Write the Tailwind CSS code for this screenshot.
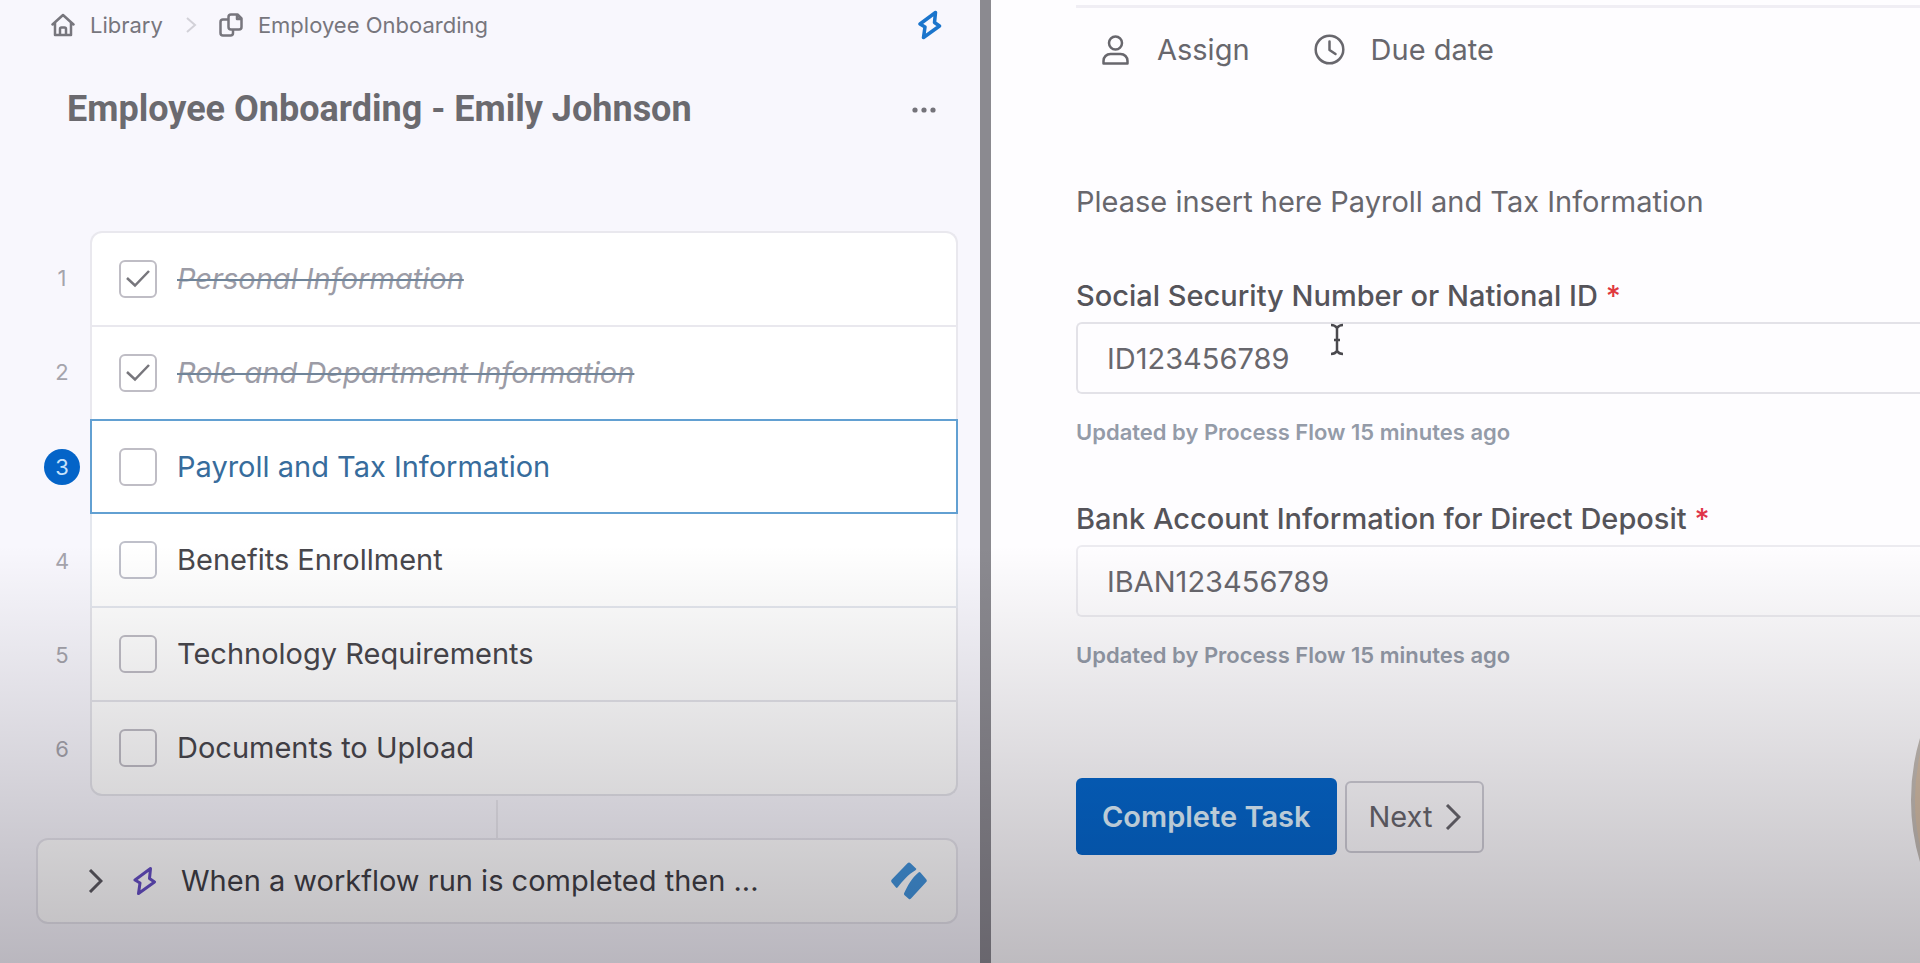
<!DOCTYPE html>
<html lang="en">
<head>
<meta charset="utf-8">
<meta name="viewport" content="width=device-width, initial-scale=1">
<title>Employee Onboarding - Emily Johnson</title>
<script src="https://cdn.jsdelivr.net/npm/@tailwindcss/browser@4"></script>
</head>
<body class="font-['Inter',sans-serif] text-[29px] leading-9">
<div class="relative grid min-h-screen grid-cols-[980fr_11fr_929fr] overflow-hidden">

  <!-- Workflow run outline -->
  <aside class="bg-[#f8f7fd] pr-[22px]">
    <header class="flex h-[50px] items-center justify-between pl-[51px] pr-4">
      <nav aria-label="Breadcrumb" class="flex items-center text-[22px] leading-7 text-[#77767d]">
        <a href="#" class="flex items-center gap-[15px]">
          <svg class="size-6" viewBox="0 0 24 24" fill="none" stroke="currentColor" stroke-width="2.500" stroke-linecap="round" stroke-linejoin="round" aria-hidden="true"><path d="M1.500 11.500 12 2l10.500 9.500M4 10v12h16V10M9 22v-6q0-1.500 1.500-1.500h3q1.500 0 1.500 1.500v6"/></svg>
          Library
        </a>
        <svg class="mx-[22px] h-4 w-3" viewBox="0 0 12 16" fill="none" stroke="#d2d1d8" stroke-width="2" aria-hidden="true"><path d="m2 1 8 7-8 7"/></svg>
        <a href="#" class="flex items-center gap-[15px]">
          <svg class="size-6" viewBox="0 0 24 24" fill="none" stroke="currentColor" stroke-width="2.500" stroke-linejoin="round" aria-hidden="true"><path d="M12 1.500h6.500l4 4V14a2.500 2.500 0 0 1-2.500 2.500h-8A2.500 2.500 0 0 1 9.500 14V4A2.500 2.500 0 0 1 12 1.500ZM18 1.500V6h4.500M9.500 6.500H4A2.500 2.500 0 0 0 1.500 9v11A2.500 2.500 0 0 0 4 22.500h7.500A2.500 2.500 0 0 0 14 20v-3.500"/></svg>
          Employee Onboarding
        </a>
      </nav>
      <button type="button" aria-label="Automations" class="text-[#1b75cc]">
        <svg class="h-[30px] w-6" viewBox="0 0 24 30" fill="none" stroke="currentColor" stroke-width="3.500" stroke-linejoin="round" aria-hidden="true"><path d="M17.500 2.500 2 14l5 3-1.500 10.500L21.500 16l-5-3.500Z"/></svg>
      </button>
    </header>

    <div class="flex h-[118px] items-center justify-between pl-[67px] pr-[21px]">
      <h1 class="font-['Roboto',sans-serif] text-[36px] leading-10 font-bold text-[#6b6a6f]">Employee Onboarding - Emily Johnson</h1>
      <button type="button" aria-label="More options" class="text-[#74737a]">
        <svg class="h-6 w-[26px]" viewBox="0 0 26 24" fill="currentColor" aria-hidden="true"><circle cx="4" cy="13" r="2.600"/><circle cx="13" cy="13" r="2.600"/><circle cx="22" cy="13" r="2.600"/></svg>
      </button>
    </div>

    <ol class="mt-[63px] grid grid-cols-[90px_1fr] text-[#48474c]">
      <li class="contents">
        <span class="flex items-center justify-center pl-[34px] text-[22px] leading-7 text-[#a5a4ac]"><span class="flex size-9 items-center justify-center">1</span></span>
        <label class="flex h-[94px] items-center gap-5 rounded-t-xl border-x-2 border-t-2 border-[#e9e8ee] bg-white pl-[27px] text-[#9c9ca6] italic line-through decoration-[#6f8499] decoration-2">
          <span class="grid size-[38px] shrink-0"><input type="checkbox" checked class="col-start-1 row-start-1 size-[38px] appearance-none rounded-md border-2 border-[#bfbdc5]"><svg class="pointer-events-none col-start-1 row-start-1 size-[38px]" viewBox="0 0 38 38" fill="none" stroke="#77767c" stroke-width="2.500" aria-hidden="true"><path d="m8 18 8 7.500 14-14.500"/></svg></span>
          Personal Information</label>
      </li>
      <li class="contents">
        <span class="flex items-center justify-center pl-[34px] text-[22px] leading-7 text-[#a5a4ac]"><span class="flex size-9 items-center justify-center">2</span></span>
        <label class="flex h-[94px] items-center gap-5 border-x-2 border-t-2 border-[#e9e8ee] bg-white pl-[27px] text-[#9c9ca6] italic line-through decoration-[#6f8499] decoration-2">
          <span class="grid size-[38px] shrink-0"><input type="checkbox" checked class="col-start-1 row-start-1 size-[38px] appearance-none rounded-md border-2 border-[#bfbdc5]"><svg class="pointer-events-none col-start-1 row-start-1 size-[38px]" viewBox="0 0 38 38" fill="none" stroke="#77767c" stroke-width="2.500" aria-hidden="true"><path d="m8 18 8 7.500 14-14.500"/></svg></span>
          Role and Department Information</label>
      </li>
      <li class="contents">
        <span class="flex items-center justify-center pl-[34px] text-[22px] leading-7 text-[#c6e2fb]"><span class="flex size-9 items-center justify-center rounded-full bg-[#0464c8]">3</span></span>
        <label class="flex h-[95px] items-center gap-5 border-2 border-[#62a0d2] bg-white pl-[27px] text-[#376c9c]">
          <input type="checkbox" class="size-[38px] shrink-0 appearance-none rounded-md border-2 border-[#bfbdc5]">
          Payroll and Tax Information</label>
      </li>
      <li class="contents">
        <span class="flex items-center justify-center pl-[34px] text-[22px] leading-7 text-[#a5a4ac]"><span class="flex size-9 items-center justify-center">4</span></span>
        <label class="flex h-[94px] items-center gap-5 border-x-2 border-b-2 border-[#e4e7ee] bg-white pl-[27px]">
          <input type="checkbox" class="size-[38px] shrink-0 appearance-none rounded-md border-2 border-[#bfc0ca]">
          Benefits Enrollment</label>
      </li>
      <li class="contents">
        <span class="flex items-center justify-center pl-[34px] text-[22px] leading-7 text-[#a5a4ac]"><span class="flex size-9 items-center justify-center">5</span></span>
        <label class="flex h-[94px] items-center gap-5 border-x-2 border-b-2 border-[#e4e4ea] bg-white pl-[27px]">
          <input type="checkbox" class="size-[38px] shrink-0 appearance-none rounded-md border-2 border-[#bfbdc5]">
          Technology Requirements</label>
      </li>
      <li class="contents">
        <span class="flex items-center justify-center pl-[34px] text-[22px] leading-7 text-[#a5a4ac]"><span class="flex size-9 items-center justify-center">6</span></span>
        <label class="flex h-[94px] items-center gap-5 rounded-b-xl border-x-2 border-b-2 border-[#e4e4ea] bg-white pl-[27px]">
          <input type="checkbox" class="size-[38px] shrink-0 appearance-none rounded-md border-2 border-[#bfbdc5]">
          Documents to Upload</label>
      </li>
    </ol>

    <div class="flex h-[42px] justify-center pt-1 pl-9"><span class="w-[2px] bg-[#e8e7ed]"></span></div>

    <section class="ml-9 flex h-[86px] items-center rounded-xl border-2 border-[#e6e5ec] bg-white pr-[29px] pl-[49px] text-[#403f45]">
      <button type="button" aria-label="Expand automation" class="text-[#5b5a60]">
        <svg class="h-6 w-4" viewBox="0 0 16 24" fill="none" stroke="currentColor" stroke-width="3" aria-hidden="true"><path d="m3 1 11 11L3 23"/></svg>
      </button>
      <svg class="ml-[30px] h-[30px] w-6" viewBox="0 0 24 30" fill="none" stroke="#654fc4" stroke-width="3" stroke-linejoin="round" aria-hidden="true"><path d="M17.500 2.500 2 14l5 3-1.500 10.500L21.500 16l-5-3.500Z"/></svg>
      <p class="ml-6 flex-1">When a workflow run is completed then ...</p>
      <svg class="h-[38px] w-9" viewBox="0 0 36 38" fill="#4295dc" aria-hidden="true"><path d="M16.500 1.200q1.500-1.400 3 0L25 6.500q.8.800-.5 1.700C17 12.500 12 18.500 6.500 25.500q-.8.800-1.500.1L.6 20.200q-1-1.200.2-2.600ZM27.500 10.500q1-.9 1.900 0l5.800 6.800q1.200 1.400 0 2.700L20 36.600q-1.200 1.300-2.400.2l-4-3.600q-1-1-.3-2.400C17 23 20.500 16.500 27.500 10.500Z"/></svg>
    </section>
  </aside>

  <div class="bg-[#8b8a90]"></div>

  <!-- Task form -->
  <main class="bg-[#fefdff] pt-[5px] pl-[85px] text-[#68676d]">
    <div class="flex h-[86px] items-center gap-16 border-t-[3px] border-[#f0eef4] pl-[26px]">
      <button type="button" class="flex items-center gap-7">
        <svg class="h-[30px] w-[27px]" viewBox="0 0 27 30" fill="none" stroke="currentColor" stroke-width="2.500" stroke-linejoin="round" aria-hidden="true"><circle cx="13.500" cy="8" r="6.500"/><path d="M1.500 28.500v-2.500c0-4 3-7 7-7h10c4 0 7 3 7 7v2.500Z"/></svg>
        Assign
      </button>
      <button type="button" class="flex items-center gap-[26px]">
        <svg class="size-[31px]" viewBox="0 0 31 31" fill="none" stroke="currentColor" stroke-width="2.500" stroke-linecap="round" stroke-linejoin="round" aria-hidden="true"><circle cx="15.500" cy="15.500" r="13.800"/><path d="M15.500 7.500v8.500l6 4"/></svg>
        Due date
      </button>
    </div>

    <form>
      <p class="mt-[93px]">Please insert here Payroll and Tax Information</p>

      <div class="mt-[58px]">
        <label for="ssn" class="block font-medium text-[#55545a]">Social Security Number or National ID <span class="text-[#e0393e]">*</span></label>
        <input id="ssn" type="text" value="ID123456789" class="mt-2 block h-[72px] w-full rounded-l-md border-y-2 border-l-2 border-[#e3e2e8] bg-transparent pl-[29px] outline-none">
        <p class="mt-5 text-[22px] leading-9 font-semibold text-[#949ba8]">Updated by Process Flow 15 minutes ago</p>
      </div>

      <div class="mt-[51px]">
        <label for="iban" class="block font-medium text-[#55545a]">Bank Account Information for Direct Deposit <span class="text-[#e0354a]">*</span></label>
        <input id="iban" type="text" value="IBAN123456789" class="mt-2 block h-[72px] w-full rounded-l-md border-y-2 border-l-2 border-[#ecebf0] bg-transparent pl-[29px] outline-none">
        <p class="mt-5 text-[22px] leading-9 font-semibold text-[#949ba8]">Updated by Process Flow 15 minutes ago</p>
      </div>

      <div class="mt-[105px] flex items-center gap-2">
        <button type="submit" class="h-[77px] rounded-md bg-[#0467cc] px-[26px] font-semibold text-[#dff3ff]">Complete Task</button>
        <button type="button" class="flex h-[72px] items-center gap-3 rounded-md border-2 border-[#cfced6] pr-[21px] pl-[22px]">Next
          <svg class="h-[26px] w-4" viewBox="0 0 16 26" fill="none" stroke="currentColor" stroke-width="3" aria-hidden="true"><path d="m2 1 12 12L2 25"/></svg>
        </button>
      </div>
    </form>
  </main>

  <!-- Webcam bubble, mostly past the right edge -->
  <div class="absolute top-[582px] -right-[427px] size-[436px] rounded-full border-4 border-[#c3bcb4] bg-[#d3bda5]"></div>

  <!-- Text cursor -->
  <svg class="absolute top-[323px] left-[1330px] h-[33px] w-[14px]" viewBox="0 0 14 33" fill="none" stroke="#4a494e" stroke-width="2.500" aria-hidden="true"><path d="M1 2q4 0 6 3 2-3 6-3M7 5v23M1 31q4 0 6-3 2 3 6 3M4 17h6"/></svg>

  <!-- Bottom shade -->
  <div class="pointer-events-none absolute inset-x-0 bottom-0 h-[418px] bg-linear-to-b from-[#08000c]/0 to-[#08000c]/26"></div>
</div>
</body>
</html>
